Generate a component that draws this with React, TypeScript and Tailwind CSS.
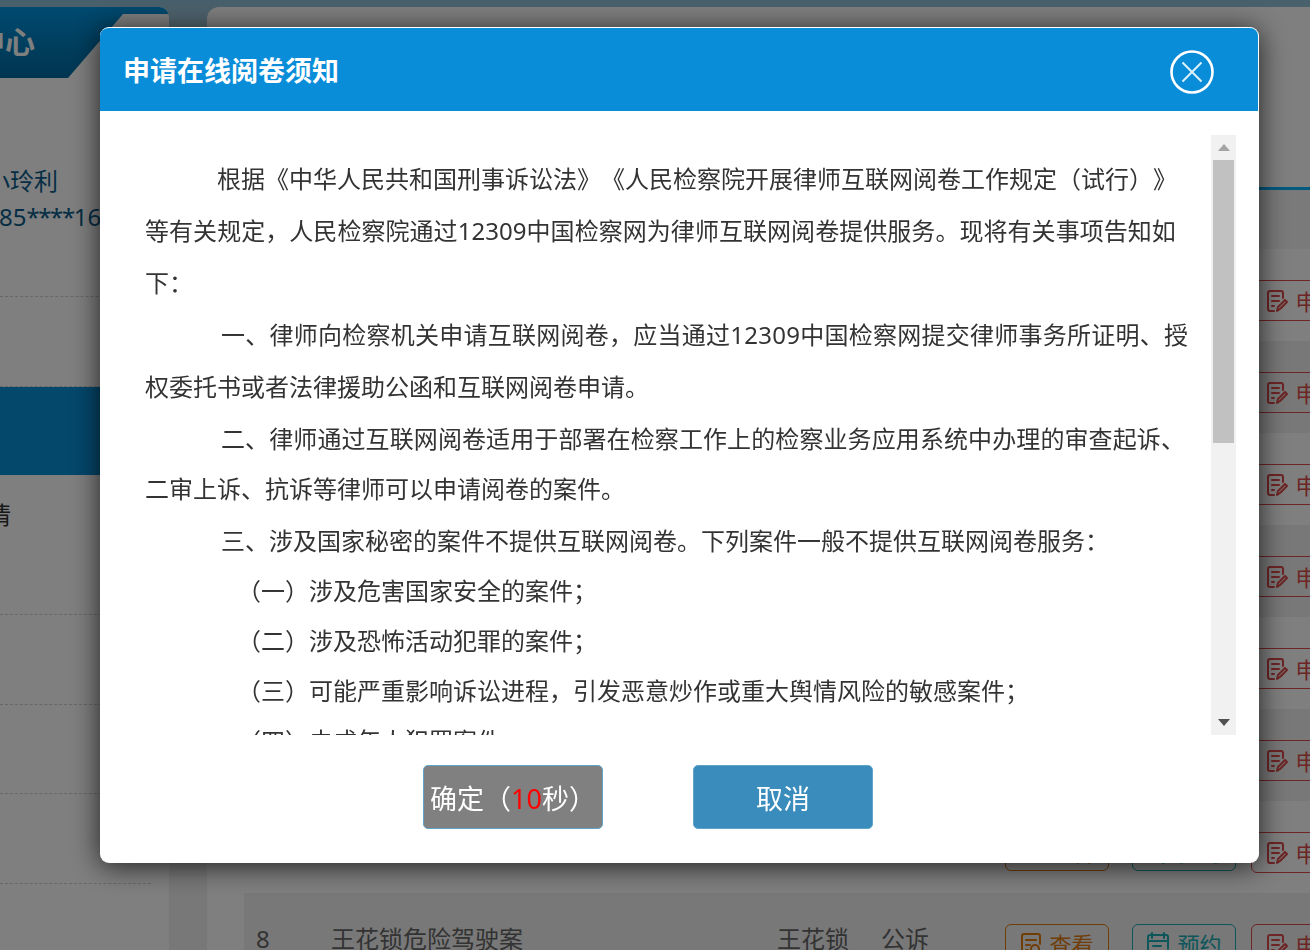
const fontStack = { fontFamily: '"Noto Sans", "Noto Sans CJK SC", sans-serif' };

const rows = [1, 2, 3, 4, 5, 6, 7, 8];

const ViewIcon = () => (
  <svg width="22" height="24" viewBox="0 0 22 24" fill="none" stroke="currentColor" strokeWidth="2" strokeLinecap="round">
    <path d="M9 22H4a2 2 0 0 1-2-2V4a2 2 0 0 1 2-2h14a2 2 0 0 1 2 2v8" />
    <path d="M6 8h10M6 13h4M6 18h2" />
    <circle cx="15" cy="17" r="4" />
    <path d="M18 20l2 2" />
  </svg>
);

const BookIcon = () => (
  <svg width="24" height="24" viewBox="0 0 24 24" fill="none" stroke="currentColor" strokeWidth="2" strokeLinecap="round">
    <path d="M6 1v5M18 1v5" />
    <path d="M10 22H4a2 2 0 0 1-2-2V5a2 2 0 0 1 2-2h16a2 2 0 0 1 2 2v11" />
    <path d="M2 9h20M7 14h8" />
    <path d="M14 20l3 3 5-5" />
  </svg>
);

const ApplyIcon = () => (
  <svg width="22" height="24" viewBox="0 0 22 24" fill="none" stroke="currentColor" strokeWidth="2" strokeLinecap="round" strokeLinejoin="round">
    <path d="M8 22H4a2 2 0 0 1-2-2V4a2 2 0 0 1 2-2h11a2 2 0 0 1 2 2v5" />
    <path d="M6 7h7M6 12h7M6 17h2" />
    <path d="M11 22l1-4 7-7 2 2-7 7z" />
  </svg>
);

const ActionButtons = () => (
  <div className="flex gap-[23px] whitespace-nowrap text-[22px]">
    <div className="flex h-[39px] w-[104px] items-center justify-center gap-[7px] rounded-[6px] border border-[#e07b0e] text-[#e07b0e]">
      <ViewIcon />
      <span>查看</span>
    </div>
    <div className="flex h-[39px] w-[104px] items-center justify-center gap-[7px] rounded-[6px] border border-[#1aaeb5] text-[#1aaeb5]">
      <BookIcon />
      <span>预约</span>
    </div>
    <div className="-ml-[8px] flex h-[41px] w-[104px] items-center justify-center gap-[7px] rounded-[6px] border border-[#dc4a4a] text-[#dc4a4a]">
      <ApplyIcon />
      <span>申请</span>
    </div>
  </div>
);

const Sidebar = () => (
  <aside className="flex h-[943px] w-[169px] shrink-0 flex-col overflow-hidden rounded-tr-[10px] bg-white">
    <div className="flex h-[71px] shrink-0 items-center bg-[linear-gradient(#0094e0,#006aa0)] pb-[2px] [clip-path:polygon(0_0,100%_0,100%_7px,123px_7px,68px_100%,0_100%)]">
      <span className="-ml-[25px] text-[30px] font-bold text-white">中心</span>
    </div>
    <div className="h-[219px] shrink-0 whitespace-nowrap border-b border-dashed border-[#cfcfcf] pt-[85px] text-[24px] leading-[36px] text-[#0b5c8a]">
      <div className="-ml-[14px]">小玲利</div>
      <div className="-ml-[1px]">
        85<span className="tracking-[-1.4px]">****</span>16
      </div>
    </div>
    <div className="h-[90px] w-[151px] shrink-0 border-b border-dashed border-[#cfcfcf]" />
    <div className="h-[88px] shrink-0 bg-[#0890d8]" />
    <div className="h-[140px] w-[151px] shrink-0 border-b border-dashed border-[#cfcfcf] pt-[22px] text-[24px] leading-[36px] text-[#333]">
      <div className="-ml-[13px]">情</div>
    </div>
    <div className="h-[90px] w-[151px] shrink-0 border-b border-dashed border-[#cfcfcf]" />
    <div className="h-[89px] w-[151px] shrink-0 border-b border-dashed border-[#cfcfcf]" />
    <div className="h-[90px] w-[151px] shrink-0 border-b border-dashed border-[#cfcfcf]" />
  </aside>
);

const CaseList = () => (
  <main className="ml-[38px] h-[943px] min-w-0 flex-1 overflow-hidden rounded-tl-[12px] bg-white">
    <div className="h-[183px] border-b-[3px] border-[#06b4ff]" />
    <div className="h-[59px] bg-[#f5f5f5]" />
    <div className="ml-[37px]">
      {rows.map((no) => (
        <div
          key={no}
          className={`grid h-[92px] grid-cols-[87px_446px_104px_124px_1fr] pt-[31px] text-[24px] leading-[30px] text-[#666] ${
            no % 2 === 0 ? "bg-[#f0f0f0]" : "bg-white"
          }`}
        >
          <div className="pl-[12px]">{no === 8 ? no : ""}</div>
          <div>{no === 8 ? "王花锁危险驾驶案" : ""}</div>
          <div>{no === 8 ? "王花锁" : ""}</div>
          <div>{no === 8 ? "公诉" : ""}</div>
          <ActionButtons />
        </div>
      ))}
    </div>
  </main>
);

const NoticeScrollbar = () => (
  <div className="flex w-[25px] shrink-0 flex-col bg-[#f1f1f1]">
    <div className="flex h-[25px] shrink-0 items-center justify-center">
      <svg width="12" height="7" viewBox="0 0 12 7">
        <path d="M6 0l6 7H0z" fill="#a3a3a3" />
      </svg>
    </div>
    <div className="mx-[2px] h-[283px] shrink-0 bg-[#c1c1c1]" />
    <div className="flex-1" />
    <div className="flex h-[25px] shrink-0 items-center justify-center">
      <svg width="12" height="7" viewBox="0 0 12 7">
        <path d="M0 0h12L6 7z" fill="#505050" />
      </svg>
    </div>
  </div>
);

const NoticeModal = () => (
  <div className="absolute inset-0 bg-black/50 pl-[100px] pt-[27px] backdrop-blur-[0.5px]">
    <div className="flex h-[836px] w-[1159px] flex-col overflow-hidden rounded-[9px] border-r border-t border-white bg-white shadow-[0_3px_28px_rgba(0,0,0,0.75)]">
      <div className="flex h-[83px] shrink-0 items-center justify-between bg-[#0a8dd9] pl-[23px] pr-[44px]">
        <h1 className="mt-[4px] text-[27px] font-bold text-white">申请在线阅卷须知</h1>
        <svg className="mt-[5px]" width="44" height="44" viewBox="0 0 44 44" fill="none">
          <circle cx="22" cy="22" r="20.5" stroke="white" strokeWidth="2.6" />
          <path d="M12.5 12.5l19 19M31.5 12.5l-19 19" stroke="#dff1fb" strokeWidth="2" />
        </svg>
      </div>

      <div className="ml-[45px] mr-[22px] mt-[24px] flex h-[600px] shrink-0">
        <div className="min-w-0 flex-1 overflow-hidden whitespace-nowrap pt-[18px] text-[24px] text-[#333] [text-spacing-trim:space-all]">
          <p className="indent-[72px] leading-[52px]">
            根据《中华人民共和国刑事诉讼法》《人民检察院开展律师互联网阅卷工作规定（试行）》
          </p>
          <p className="leading-[52px] tracking-[0.05px]">等有关规定，人民检察院通过12309中国检察网为律师互联网阅卷提供服务。现将有关事项告知如</p>
          <p className="leading-[52px]">下：</p>
          <p className="indent-[76px] leading-[52px] tracking-[0.25px]">一、律师向检察机关申请互联网阅卷，应当通过12309中国检察网提交律师事务所证明、授</p>
          <p className="leading-[52px]">权委托书或者法律援助公函和互联网阅卷申请。</p>
          <p className="indent-[76px] leading-[51px] tracking-[0.1px]">二、律师通过互联网阅卷适用于部署在检察工作上的检察业务应用系统中办理的审查起诉、</p>
          <p className="leading-[50px]">二审上诉、抗诉等律师可以申请阅卷的案件。</p>
          <p className="mt-[1px] indent-[76px] leading-[51px]">三、涉及国家秘密的案件不提供互联网阅卷。下列案件一般不提供互联网阅卷服务：</p>
          <p className="indent-[92px] leading-[50px]">（一）涉及危害国家安全的案件；</p>
          <p className="indent-[92px] leading-[50px]">（二）涉及恐怖活动犯罪的案件；</p>
          <p className="indent-[92px] leading-[50px]">（三）可能严重影响诉讼进程，引发恶意炒作或重大舆情风险的敏感案件；</p>
          <p className="indent-[92px] leading-[50px]">（四）未成年人犯罪案件</p>
        </div>
        <NoticeScrollbar />
      </div>

      <div className="ml-[323px] mt-[30px] flex gap-[90px] text-[27px] text-white">
        <button className="flex h-[64px] w-[180px] items-center justify-center whitespace-nowrap rounded-[5px] border border-[#5fa3c7] bg-[#808080] pt-[4px]">
          确定（<span className="text-[#ff0000]">10</span>秒）
        </button>
        <button className="flex h-[64px] w-[180px] items-center justify-center rounded-[5px] border border-[#5fa3c7] bg-[#398cbc] pt-[4px]">
          取消
        </button>
      </div>
    </div>
  </div>
);

export default function App() {
  return (
    <div
      className="relative h-[950px] w-[1310px] overflow-hidden bg-[linear-gradient(#8ec0d8,#f0f0f0_90px)] pt-[7px]"
      style={fontStack}
    >
      <div className="flex">
        <Sidebar />
        <CaseList />
      </div>
      <NoticeModal />
    </div>
  );
}
